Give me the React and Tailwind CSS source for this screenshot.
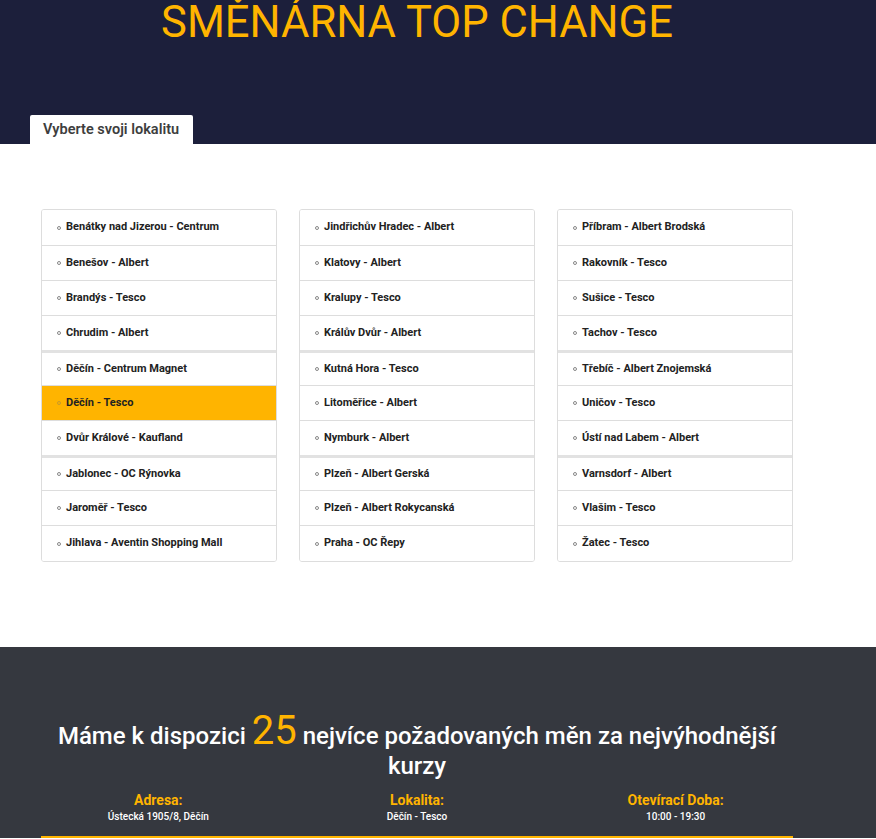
import React from "react";

const cols = [
  [
    "Benátky nad Jizerou - Centrum",
    "Benešov - Albert",
    "Brandýs - Tesco",
    "Chrudim - Albert",
    "Děčín - Centrum Magnet",
    "Děčín - Tesco",
    "Dvůr Králové - Kaufland",
    "Jablonec - OC Rýnovka",
    "Jaroměř - Tesco",
    "Jihlava - Aventin Shopping Mall",
  ],
  [
    "Jindřichův Hradec - Albert",
    "Klatovy - Albert",
    "Kralupy - Tesco",
    "Králův Dvůr - Albert",
    "Kutná Hora - Tesco",
    "Litoměřice - Albert",
    "Nymburk - Albert",
    "Plzeň - Albert Gerská",
    "Plzeň - Albert Rokycanská",
    "Praha - OC Řepy",
  ],
  [
    "Příbram - Albert Brodská",
    "Rakovník - Tesco",
    "Sušice - Tesco",
    "Tachov - Tesco",
    "Třebíč - Albert Znojemská",
    "Uničov - Tesco",
    "Ústí nad Labem - Albert",
    "Varnsdorf - Albert",
    "Vlašim - Tesco",
    "Žatec - Tesco",
  ],
];

function Row({ label, active, idx }) {
  const sep = idx === 4 || idx === 7;
  return (
    <li
      className={
        (idx === 0 ? "" : sep ? "border-t-[3px] border-[#e2e2e2] " : "border-t border-[#dddddd] ") +
        (active ? "bg-[#ffb400] " : "bg-white ") +
        "flex items-center pl-[15px] " +
        (idx === 9 ? "h-[36px]" : "h-[35px]")
      }
    >
      <span className={"inline-block w-[4px] h-[4px] rounded-full border mr-[5px] " + (active ? "border-[#c99a2a]" : "border-[#888]")}></span>
      <span className="text-[11px] font-bold text-[#222]">{label}</span>
    </li>
  );
}

export default function App() {
  return (
    <div className="w-[876px] min-h-[839px] font-['Roboto',sans-serif] overflow-hidden">
      <header className="bg-[#1c1f3b] h-[144px] flex flex-col">
        <div className="w-[752px] ml-[41px] pt-[1px] text-center text-[43.5px] leading-none text-[#ffb400]">
          SMĚNÁRNA TOP CHANGE
        </div>
        <div className="mt-auto ml-[30px]">
          <div className="inline-flex items-center h-[29px] w-[163px] bg-white rounded-t-[2px] pl-[13px] text-[14.5px] font-semibold text-[#3e3e3e]">
            Vyberte svoji lokalitu
          </div>
        </div>
      </header>
      <section className="bg-white pt-[65px] pb-[85px]">
        <div className="w-[752px] ml-[41px] grid grid-cols-3 gap-[22px]">
          {cols.map((c, ci) => (
            <ul key={ci} className="border border-[#dddddd] rounded-[3px] overflow-hidden">
              {c.map((l, i) => (
                <Row key={l} label={l} idx={i} active={l === "Děčín - Tesco"} />
              ))}
            </ul>
          ))}
        </div>
      </section>
      <section className="bg-[#35383f] pt-[69px]">
        <div className="w-[752px] ml-[41px] border-b-2 border-[#ffb400] pb-[12px]">
          <h2 className="text-center text-white text-[24px] font-medium leading-[30px] px-[10px]">
            Máme k dispozici{" "}
            <span className="text-[40px] font-normal text-[#ffb400]">25</span>{" "}
            nejvíce požadovaných měn za nejvýhodnější kurzy
          </h2>
          <div className="grid grid-cols-3 mt-[10px] -mx-[12px]">
            {[
              ["Adresa:", "Ústecká 1905/8, Děčín"],
              ["Lokalita:", "Děčín - Tesco"],
              ["Otevírací Doba:", "10:00 - 19:30"],
            ].map(([a, b]) => (
              <div key={a} className="text-center">
                <div className="text-[14px] leading-[18px] font-bold text-[#ffb400]">{a}</div>
                <div className="text-[10px] leading-[15px] font-medium text-white">{b}</div>
              </div>
            ))}
          </div>
        </div>
      </section>
    </div>
  );
}
